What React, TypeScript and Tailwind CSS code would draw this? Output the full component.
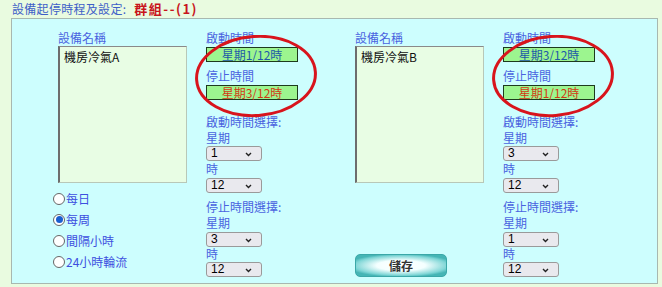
import React from "react";

const font = { fontFamily: '"Noto Sans CJK TC", "Noto Sans", sans-serif' };
const arial = { fontFamily: '"Liberation Sans", Arial, sans-serif' };

function Label({ children, className = "" }: { children: React.ReactNode; className?: string }) {
  return (
    <div className={"h-[14px] leading-[14px] text-[12px] text-[#4a63e0] whitespace-nowrap " + className}>
      {children}
    </div>
  );
}

function Sel({ value, className = "" }: { value: string; className?: string }) {
  return (
    <div
      className={
        "relative w-[56px] h-[15px] rounded-[3px] border border-[#9a9a9a] bg-[#e9e9ee] flex items-center pl-[4px] text-[12px] leading-[13px] text-black " +
        className
      }
      style={arial}
    >
      <span>{value}</span>
      <svg className="absolute right-[9px] top-[5px]" width="7" height="5" viewBox="0 0 7 5">
        <path d="M1 1 L3.5 3.5 L6 1" stroke="#222" strokeWidth="1.4" fill="none" />
      </svg>
    </div>
  );
}

function TimeBox({ text, color }: { text: string; color: string }) {
  return (
    <div
      className={
        "w-[92px] h-[15px] border-[1.5px] border-[#1d3a1d] bg-[#9cf58f] flex items-center justify-center text-[12px] leading-[12px] " +
        color
      }
    >
      {text}
    </div>
  );
}

function Group({
  name,
  start,
  stop,
  s1,
  s2,
  bottom,
}: {
  name: string;
  start: string;
  stop: string;
  s1: string;
  s2: string;
  bottom: React.ReactNode;
}) {
  return (
    <div className="flex flex-row w-[297px] relative">
      <div className="w-[129px] flex flex-col">
        <Label>設備名稱</Label>
        <div className="mt-[1px] h-[137px] w-[129px] bg-[#e8fde4] border border-[#b8c8b8] border-l-[2px] border-l-[#6d6d6d] border-t-[#8a8a8a] pl-[4px] pt-[3px] text-[12px] leading-[14px] text-[#111]">
          {name}
        </div>
        {bottom}
      </div>
      <div className="ml-[19px] flex flex-col">
        <Label>啟動時間</Label>
        <div className="mt-[2px]">
          <TimeBox text={start} color="text-[#1f5aa8]" />
        </div>
        <Label className="mt-[7px]">停止時間</Label>
        <div className="mt-[2px]">
          <TimeBox text={stop} color="text-[#d23a14]" />
        </div>
        <Label className="mt-[15px]">啟動時間選擇:</Label>
        <Label className="mt-[2px]">星期</Label>
        <Sel value={s1} className="mt-[1px]" />
        <Label className="mt-[1px]">時</Label>
        <Sel value="12" className="mt-[2px]" />
        <Label className="mt-[7px]">停止時間選擇:</Label>
        <Label className="mt-[2px]">星期</Label>
        <Sel value={s2} className="mt-[2px]" />
        <Label className="mt-[0px]">時</Label>
        <Sel value="12" className="mt-[1px]" />
      </div>
      <svg
        className="absolute pointer-events-none"
        style={{ left: 135, top: 4 }}
        width="126"
        height="84"
        viewBox="0 0 126 84"
      >
        <ellipse cx="63" cy="41" rx="59.5" ry="39.5" stroke="#d8141c" strokeWidth="3" fill="none" transform="rotate(-4 63 41)" />
      </svg>
    </div>
  );
}

function Radio({ label, checked }: { label: string; checked?: boolean }) {
  return (
    <div className="flex items-center h-[21px]">
      <div className="w-[12px] h-[12px] rounded-full border border-[#666] bg-white flex items-center justify-center">
        {checked && <div className="w-[7px] h-[7px] rounded-full bg-[#1a5fd0]" />}
      </div>
      <span className="ml-[1px] text-[12px] text-[#3d4fe0] whitespace-nowrap">{label}</span>
    </div>
  );
}

export default function App() {
  return (
    <div className="w-[662px] h-[287px] bg-[#e9fbe0] overflow-hidden" style={font}>
      <div className="h-[18px] pl-[12px] flex items-center text-[12px] whitespace-nowrap">
        <span className="text-[#3f5fc8] tracking-[0.3px]">設備起停時程及設定:</span>
        <span className="ml-[8px] text-[#c8141c] font-bold text-[13px] tracking-[1.5px]">群組--(1)</span>
      </div>
      <div className="ml-[11px] w-[647px] h-[266px] bg-[#cdfefe] border border-[#a8b8b0] pl-[46px] pt-[12px] flex flex-row">
        <Group
          name="機房冷氣A"
          start="星期1/12時"
          stop="星期3/12時"
          s1="1"
          s2="3"
          bottom={
            <div className="-ml-[5px] mt-[5px] flex flex-col">
              <Radio label="每日" />
              <Radio label="每周" checked />
              <Radio label="間隔小時" />
              <Radio label="24小時輪流" />
            </div>
          }
        />
        <Group
          name="機房冷氣B"
          start="星期3/12時"
          stop="星期1/12時"
          s1="3"
          s2="1"
          bottom={
            <button
              className="mt-[71px] w-[92px] h-[23px] rounded-[5px] border border-[#3aa8a8] text-[12px] font-bold text-[#333]"
              style={{
                background:
                  "radial-gradient(ellipse 60% 55% at 50% 50%, #ffffff 0%, #f4ffff 45%, #7fd6d6 85%, #45b5b5 100%)",
              }}
            >
              儲存
            </button>
          }
        />
      </div>
    </div>
  );
}
